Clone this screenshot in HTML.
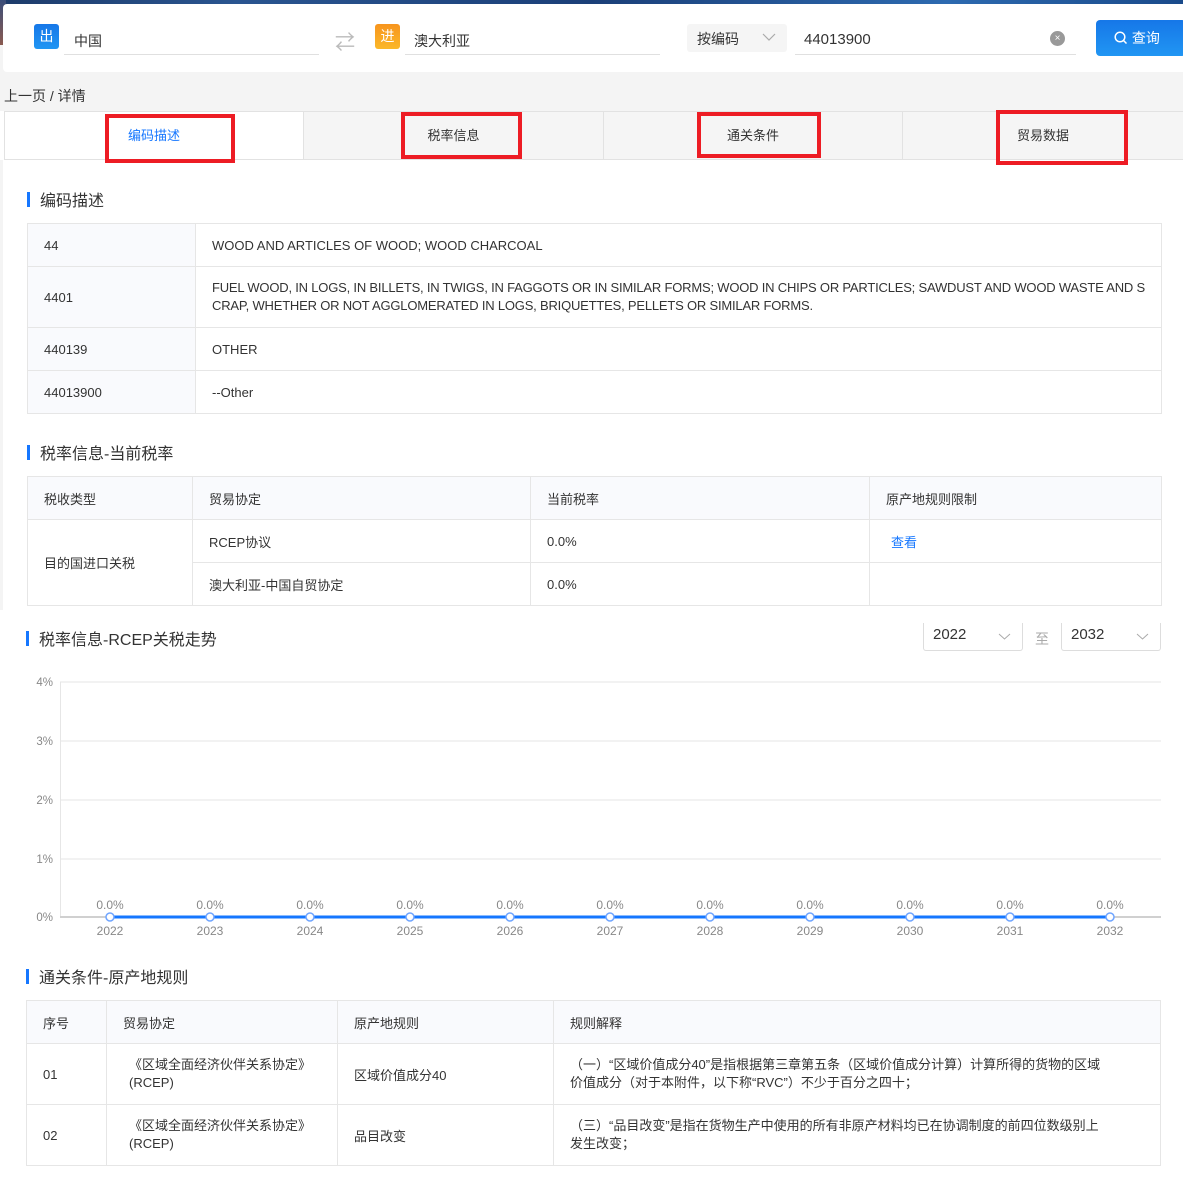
<!DOCTYPE html>
<html><head><meta charset="utf-8">
<style>
*{margin:0;padding:0;box-sizing:border-box}
body{width:1183px;height:1195px;position:relative;background:#fff;font-family:"Liberation Sans","Noto Sans CJK SC",sans-serif;font-size:13px;color:#333;overflow:hidden}
.a{position:absolute}
.topbg{left:0;top:0;width:1183px;height:111px;background:#f4f4f4}
.img{left:0;top:0;width:1183px;height:12px;background:linear-gradient(90deg,#1d3b6a,#2a5590 20%,#1b3f78 50%,#2d6ab0 80%,#1a4a8a)}
.imgl{left:0;top:0;width:6px;height:45px;background:linear-gradient(#3a4e7a,#8a5a50)}
.card{left:3px;top:4px;width:1185px;height:68px;background:#fff;border-radius:4px}
.badge{width:25px;height:25px;border-radius:3px;color:#fff;font-size:14px;text-align:center;line-height:25px}
.line{height:1px;background:#e0e0e0}
.tab{top:111px;height:49px;border-top:1px solid #e2e2e2;border-bottom:1px solid #e2e2e2;background:#f5f5f5;text-align:center;line-height:48px;font-size:13px;color:#333}
.red{border:4px solid #ed1c24}
.title{font-size:16px;color:#333}
.bar{width:3px;height:15px;background:#1677ff}
table{position:absolute;border-collapse:collapse;font-size:13px;color:#333}
td{border:1px solid #e6e6e6;padding:0 16px;vertical-align:middle}
.h td{background:#f9fafd}
.sel{border:1px solid #ddd;border-top:none;border-radius:0 0 3px 3px;height:28px;font-size:15px;line-height:24px;padding-left:9px}
</style></head><body>
<div class="a topbg"></div>
<div class="a img"></div>
<div class="a imgl"></div>
<div class="a card"></div>
<div class="a badge" style="left:34px;top:24px;background:linear-gradient(#1677e8,#2196f3)">出</div>
<div class="a" style="left:74px;top:31px;font-size:14px">中国</div>
<div class="a line" style="left:64px;top:54px;width:255px"></div>
<div class="a" style="left:335px;top:26px;color:#bbb;font-size:20px">⇄</div>
<div class="a badge" style="left:375px;top:24px;background:linear-gradient(#f7941d,#fbb829)">进</div>
<div class="a" style="left:414px;top:31px;font-size:14px">澳大利亚</div>
<div class="a line" style="left:405px;top:54px;width:255px"></div>
<div class="a" style="left:687px;top:24px;width:100px;height:28px;background:#f5f5f5;border-radius:3px"></div>
<div class="a" style="left:697px;top:29px;font-size:14px">按编码</div>
<svg class="a" style="left:762px;top:33px" width="14" height="9"><path d="M1 1l6 6 6-6" fill="none" stroke="#aaa" stroke-width="1.2"/></svg>
<div class="a" style="left:804px;top:31px;font-size:15px">44013900</div>
<div class="a line" style="left:795px;top:54px;width:281px"></div>
<div class="a" style="left:1050px;top:31px;width:15px;height:15px;border-radius:50%;background:#999;color:#fff;font-size:10px;text-align:center;line-height:15px">×</div>
<div class="a" style="left:1096px;top:20px;width:90px;height:36px;background:linear-gradient(#1677e8,#2196f3);border-radius:4px;color:#fff;font-size:14px;line-height:36px;padding-left:18px">
<svg width="14" height="14" style="vertical-align:-2px"><circle cx="6" cy="6" r="4.8" fill="none" stroke="#fff" stroke-width="1.5"/><path d="M9.5 9.5l3 3" stroke="#fff" stroke-width="1.5"/></svg>&nbsp;查询</div>
<div class="a" style="left:4px;top:86px;font-size:14px">上一页 / 详情</div>
<div class="a" style="left:0;top:160px;width:3px;height:450px;background:#f4f4f4"></div>
<div class="a tab" style="left:4px;width:299px;background:#fff;color:#1677ff;border-left:1px solid #e2e2e2">编码描述</div>
<div class="a tab" style="left:303px;width:300px;border-left:1px solid #e2e2e2">税率信息</div>
<div class="a tab" style="left:603px;width:299px;border-left:1px solid #e2e2e2">通关条件</div>
<div class="a tab" style="left:902px;width:281px;border-left:1px solid #e2e2e2">贸易数据</div>
<div class="a red" style="left:105px;top:114px;width:130px;height:49px"></div>
<div class="a red" style="left:401px;top:112px;width:121px;height:47px"></div>
<div class="a red" style="left:697px;top:112px;width:124px;height:46px"></div>
<div class="a red" style="left:996px;top:110px;width:132px;height:55px"></div>

<div class="a bar" style="left:27px;top:192px"></div><div class="a title" style="left:40px;top:187px">编码描述</div>
<table style="left:27px;top:223px;width:1135px">
<tr style="height:43px"><td style="width:168px;background:#f9fafd">44</td><td>WOOD AND ARTICLES OF WOOD; WOOD CHARCOAL</td></tr>
<tr style="height:61px"><td style="background:#f9fafd">4401</td><td style="line-height:18px;letter-spacing:-0.2px">FUEL WOOD, IN LOGS, IN BILLETS, IN TWIGS, IN FAGGOTS OR IN SIMILAR FORMS; WOOD IN CHIPS OR PARTICLES; SAWDUST AND WOOD WASTE AND S<br>CRAP, WHETHER OR NOT AGGLOMERATED IN LOGS, BRIQUETTES, PELLETS OR SIMILAR FORMS.</td></tr>
<tr style="height:43px"><td style="background:#f9fafd">440139</td><td>OTHER</td></tr>
<tr style="height:43px"><td style="background:#f9fafd">44013900</td><td>--Other</td></tr>
</table>

<div class="a bar" style="left:27px;top:445px"></div><div class="a title" style="left:40px;top:440px">税率信息-当前税率</div>
<table style="left:27px;top:476px;width:1135px">
<tr class="h" style="height:43px"><td style="width:165px">税收类型</td><td style="width:338px">贸易协定</td><td style="width:339px">当前税率</td><td>原产地规则限制</td></tr>
<tr style="height:43px"><td rowspan="2">目的国进口关税</td><td>RCEP协议</td><td>0.0%</td><td style="color:#1677ff;padding-left:21px">查看</td></tr>
<tr style="height:43px"><td>澳大利亚-中国自贸协定</td><td>0.0%</td><td></td></tr>
</table>

<div class="a bar" style="left:26px;top:631px"></div><div class="a title" style="left:39px;top:626px">税率信息-RCEP关税走势</div>
<div class="a sel" style="left:923px;top:623px;width:100px">2022</div>
<svg class="a" style="left:998px;top:633px" width="13" height="8"><path d="M1 1l5.5 5 5.5-5" fill="none" stroke="#aaa"/></svg>
<div class="a" style="left:1035px;top:629px;color:#aaa;font-size:14px">至</div>
<div class="a sel" style="left:1061px;top:623px;width:100px">2032</div>
<svg class="a" style="left:1136px;top:633px" width="13" height="8"><path d="M1 1l5.5 5 5.5-5" fill="none" stroke="#aaa"/></svg>

<svg class="a" style="left:0;top:670px" width="1183" height="280">
<g stroke="#e6e6e6" stroke-width="1">
<line x1="60" y1="12" x2="1161" y2="12"/><line x1="60" y1="71" x2="1161" y2="71"/><line x1="60" y1="130" x2="1161" y2="130"/><line x1="60" y1="189" x2="1161" y2="189"/><line x1="60.5" y1="12" x2="60.5" y2="247"/>
</g>
<line x1="60" y1="247" x2="1161" y2="247" stroke="#d0d0d0" stroke-width="2"/>
<g fill="#888" font-size="11.5" font-family="Liberation Sans,sans-serif" text-anchor="end">
<text x="53" y="16">4%</text><text x="53" y="75">3%</text><text x="53" y="134">2%</text><text x="53" y="193">1%</text><text x="53" y="251">0%</text></g>
<line x1="110" y1="247" x2="1110" y2="247" stroke="#1677ff" stroke-width="3"/>
<g fill="#fff" stroke="#6fa5ff" stroke-width="1.5">
<circle cx="110" cy="247" r="4"/><circle cx="210" cy="247" r="4"/><circle cx="310" cy="247" r="4"/><circle cx="410" cy="247" r="4"/><circle cx="510" cy="247" r="4"/><circle cx="610" cy="247" r="4"/><circle cx="710" cy="247" r="4"/><circle cx="810" cy="247" r="4"/><circle cx="910" cy="247" r="4"/><circle cx="1010" cy="247" r="4"/><circle cx="1110" cy="247" r="4"/></g>
<g fill="#888" font-size="12" font-family="Liberation Sans,sans-serif" text-anchor="middle">
<text x="110" y="239">0.0%</text><text x="210" y="239">0.0%</text><text x="310" y="239">0.0%</text><text x="410" y="239">0.0%</text><text x="510" y="239">0.0%</text><text x="610" y="239">0.0%</text><text x="710" y="239">0.0%</text><text x="810" y="239">0.0%</text><text x="910" y="239">0.0%</text><text x="1010" y="239">0.0%</text><text x="1110" y="239">0.0%</text>
<text x="110" y="265">2022</text><text x="210" y="265">2023</text><text x="310" y="265">2024</text><text x="410" y="265">2025</text><text x="510" y="265">2026</text><text x="610" y="265">2027</text><text x="710" y="265">2028</text><text x="810" y="265">2029</text><text x="910" y="265">2030</text><text x="1010" y="265">2031</text><text x="1110" y="265">2032</text></g>
</svg>

<div class="a bar" style="left:26px;top:969px"></div><div class="a title" style="left:39px;top:964px">通关条件-原产地规则</div>
<table style="left:26px;top:1000px;width:1135px">
<tr class="h" style="height:43px"><td style="width:80px">序号</td><td style="width:231px">贸易协定</td><td style="width:216px">原产地规则</td><td>规则解释</td></tr>
<tr style="height:61px"><td>01</td><td style="line-height:18px;padding-left:22px">《区域全面经济伙伴关系协定》<br>(RCEP)</td><td>区域价值成分40</td><td style="line-height:18px;white-space:nowrap">（一）“区域价值成分40”是指根据第三章第五条（区域价值成分计算）计算所得的货物的区域<br>价值成分（对于本附件，以下称“RVC”）不少于百分之四十；</td></tr>
<tr style="height:61px"><td>02</td><td style="line-height:18px;padding-left:22px">《区域全面经济伙伴关系协定》<br>(RCEP)</td><td>品目改变</td><td style="line-height:18px;white-space:nowrap">（三）“品目改变”是指在货物生产中使用的所有非原产材料均已在协调制度的前四位数级别上<br>发生改变；</td></tr>
</table>
</body></html>
